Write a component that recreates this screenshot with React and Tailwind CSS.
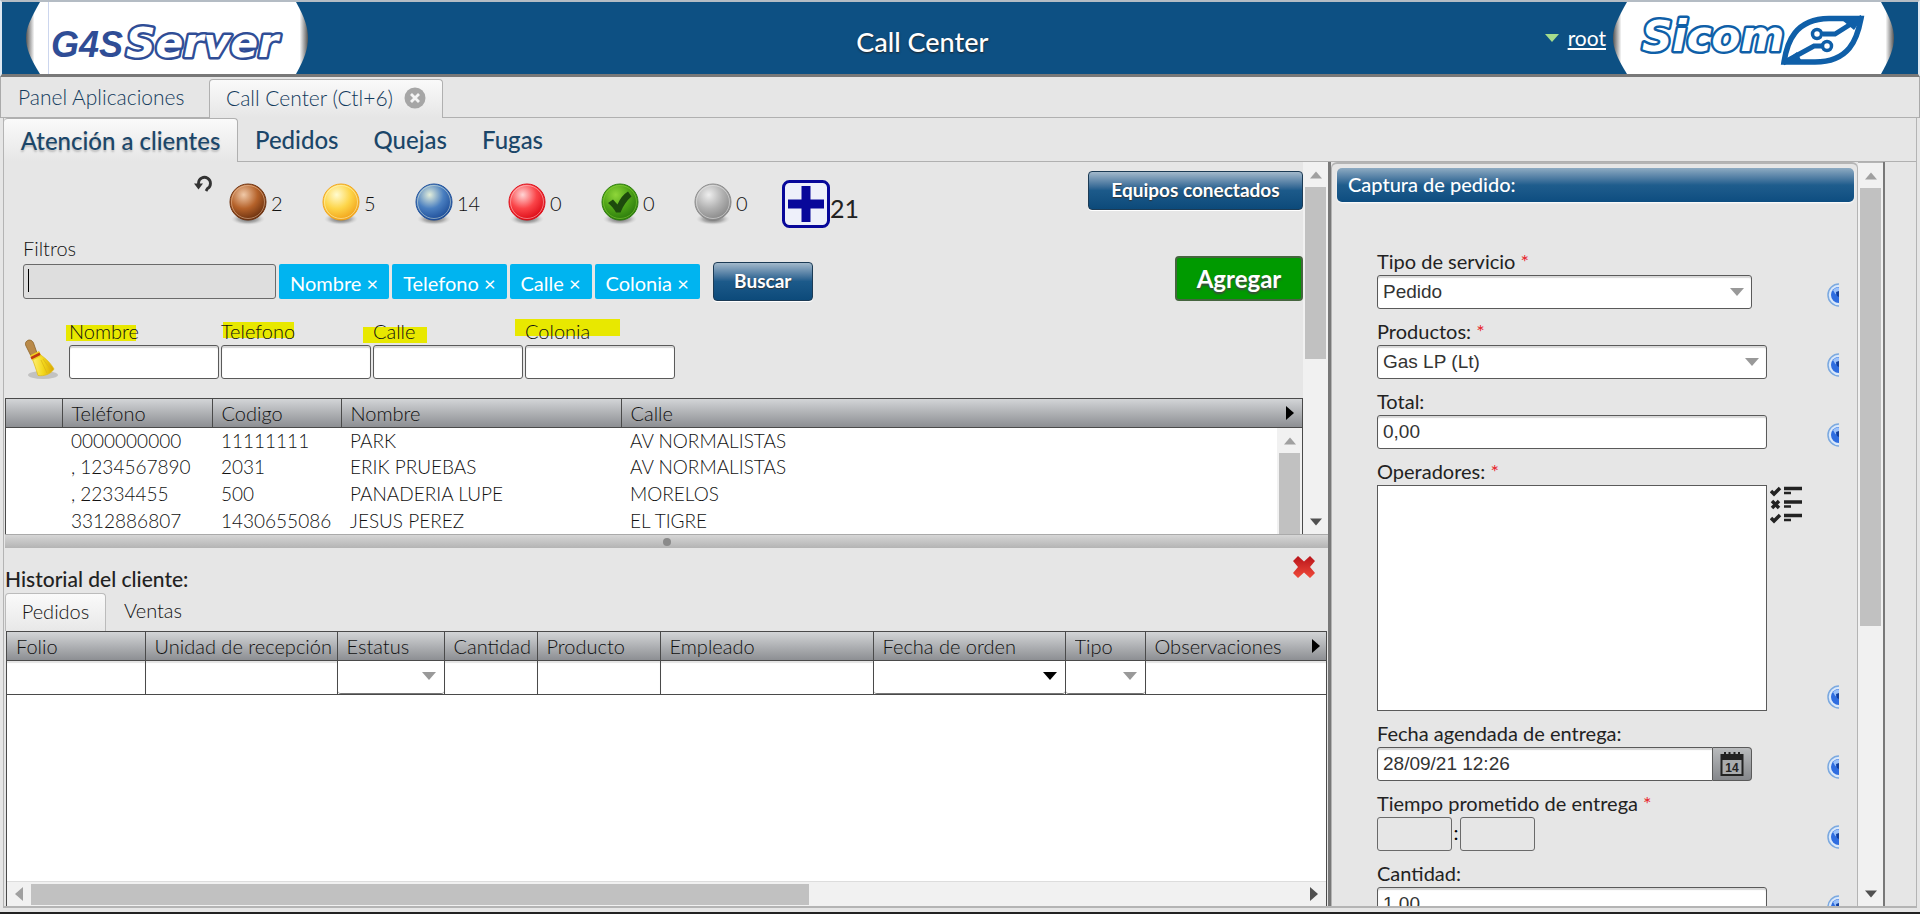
import React, { useState } from "react";

const statusBalls = [
  { id: "brown", label: "Registrados", count: 2, light: "#f0c9a8", mid: "#b5622a", dark: "#6d3210" },
  { id: "yellow", label: "Pendientes", count: 5, light: "#fffbd0", mid: "#fdd549", dark: "#f2a51c" },
  { id: "blue", label: "Asignados", count: 14, light: "#e3eedb", mid: "#4a7fc0", dark: "#1f4f9a" },
  { id: "red", label: "Cancelados", count: 0, light: "#ffd5d5", mid: "#fa4448", dark: "#dd0d18" },
  { id: "check", label: "Surtidos", count: 0, light: "#8fd63a", mid: "#4fa417", dark: "#2d7d0e" },
  { id: "gray", label: "Inactivos", count: 0, light: "#eeeeee", mid: "#b2b2b2", dark: "#8a8a8a" },
];

const searchFields = [
  { name: "Nombre", mark: "-left-[3px] top-[6px] w-[70px] h-[16px]" },
  { name: "Telefono", mark: "left-[2px] top-[3px] w-[71px] h-[16px]" },
  { name: "Calle", mark: "-left-[10px] top-[8px] w-[64px] h-[16px]" },
  { name: "Colonia", mark: "-left-[10px] top-0 w-[105px] h-[17px]" },
];

const clients = [
  ["0000000000", "11111111", "PARK", "AV NORMALISTAS"],
  [", 1234567890", "2031", "ERIK PRUEBAS", "AV NORMALISTAS"],
  [", 22334455", "500", "PANADERIA LUPE", "MORELOS"],
  ["3312886807", "1430655086", "JESUS PEREZ", "EL TIGRE"],
];

const historyColumns = [
  { name: "Folio", width: "w-[138px]" },
  { name: "Unidad de recepción", width: "w-[192px]" },
  { name: "Estatus", width: "w-[107px]", type: "select" },
  { name: "Cantidad", width: "w-[93px]" },
  { name: "Producto", width: "w-[123px]" },
  { name: "Empleado", width: "w-[213px]" },
  { name: "Fecha de orden", width: "w-[192px]", type: "date" },
  { name: "Tipo", width: "w-[80px]", type: "select" },
  { name: "Observaciones", width: "" },
];

const headGradient = "bg-gradient-to-b from-[#d3d5d7] to-[#8d8f93]";
const blueButton =
  "rounded-[4px] border border-[#1c3b55] bg-gradient-to-b from-[#a3b9cb] via-[#1c5a8a] to-[#0c4a7a] text-white font-bold text-[19px] [text-shadow:0_1px_1px_#333] shadow-[0_1px_0_#fff]";
const fieldBox =
  "h-[34px] rounded-[3px] border border-[#5a5a5a] bg-white font-['Liberation_Sans',sans-serif] text-[19px] text-[#333] px-[5px] shadow-[inset_0_2px_1px_#d8d8d8] outline-none";

const Arrow = ({ dir = "down", className = "" }) => {
  const points = {
    down: "0,0 14,0 7,8",
    up: "0,8 14,8 7,0",
    left: "8,0 8,14 0,7",
    right: "0,0 8,7 0,14",
  };
  const flat = dir === "down" || dir === "up";
  return (
    <svg
      width={flat ? 14 : 8}
      height={flat ? 8 : 14}
      viewBox={flat ? "0 0 14 8" : "0 0 8 14"}
      className={className}
      fill="currentColor"
    >
      <polygon points={points[dir]} />
    </svg>
  );
};

const Ball = ({ ball }) => (
  <svg width="40" height="42" viewBox="0 0 40 42">
    <defs>
      <radialGradient id={`ball-${ball.id}`} cx="0.38" cy="0.3" r="0.7">
        <stop offset="0" stopColor={ball.light} />
        <stop offset="0.55" stopColor={ball.mid} />
        <stop offset="1" stopColor={ball.dark} />
      </radialGradient>
      <radialGradient id={`shade-${ball.id}`}>
        <stop offset="0" stopColor="#555" />
        <stop offset="0.6" stopColor="#999" stopOpacity="0.7" />
        <stop offset="1" stopColor="#ccc" stopOpacity="0" />
      </radialGradient>
    </defs>
    <ellipse cx="20" cy="36" rx="17" ry="6" fill={`url(#shade-${ball.id})`} />
    <circle cx="20" cy="19" r="18" fill={`url(#ball-${ball.id})`} stroke={ball.dark} />
    <circle cx="20" cy="19" r="16.5" fill="none" stroke={ball.light} strokeOpacity="0.5" />
    {ball.id === "check" && (
      <path
        d="M8 20l5-3.500 4.500 5c2.500-5.500 5.500-10 10.500-13l3.500 5c-5 4-8 9-11 16h-4.500c-2-4-5-7-8-9.500z"
        fill="#1d4a0d"
      />
    )}
  </svg>
);

const Broom = () => (
  <svg width="36" height="40" viewBox="0 0 36 40">
    <defs>
      <linearGradient id="broom" x1="0" x2="1">
        <stop offset="0" stopColor="#fff07a" />
        <stop offset="0.5" stopColor="#f3d81c" />
        <stop offset="1" stopColor="#d8a500" />
      </linearGradient>
    </defs>
    <ellipse cx="20" cy="36" rx="15" ry="4" fill="#aaa" opacity="0.6" />
    <path d="M3 3c2-3 6-2.500 7.500 1l3.500 10-6 3-5-10c-.7-1.500-.8-3 0-4z" fill="#b98a4a" stroke="#8d6327" strokeWidth="0.8" />
    <path d="M9 19l7-4c5 3 11 8 15 15-3 5-10 7.500-16 6.500C13 30 11 24 9 19z" fill="url(#broom)" stroke="#e0bd1c" strokeWidth="0.8" />
    <path d="M7 16.500l9-4.500 2.500 5-9 4.500z" fill="#f0d020" />
    <path d="M7.500 18l9-4.500 1 2.500-9 4.500z" fill="#c03a12" />
    <path d="M18 21l6 13M20 20l8 11" stroke="#dcb51a" fill="none" strokeWidth="0.8" />
  </svg>
);

const ServerLogo = () => (
  <svg width="286" height="72" viewBox="0 0 286 72" className="ml-6 shrink-0">
    <defs>
      <linearGradient id="oval-left" x1="0" x2="1">
        <stop offset="0" stopColor="#555" />
        <stop offset="0.03" stopColor="#fff" />
        <stop offset="0.97" stopColor="#fff" />
        <stop offset="1" stopColor="#555" />
      </linearGradient>
    </defs>
    <path d="M14 0C4 18 0 26 0 36s4 20 14 36h256c9-16 12-26 12-36s-3-20-12-36z" fill="url(#oval-left)" />
    <path d="M22.500 0v72" stroke="#ccd6ee" />
    <text x="25" y="55" fontFamily="Liberation Sans, sans-serif" fontStyle="italic" fontWeight="700" fontSize="36" fill="#2f4d96">
      G4S
    </text>
    <text
      x="100"
      y="55"
      fontFamily="DejaVu Sans, sans-serif"
      fontStyle="italic"
      fontWeight="700"
      fontSize="41"
      fill="#fff"
      stroke="#2f4d96"
      strokeWidth="5"
      strokeLinejoin="round"
      paintOrder="stroke"
    >
      Server
    </text>
  </svg>
);

const SicomLogo = () => (
  <svg width="284" height="72" viewBox="0 0 284 72" className="mr-[21px]">
    <defs>
      <linearGradient id="oval-right" x1="0" x2="1">
        <stop offset="0" stopColor="#555" />
        <stop offset="0.03" stopColor="#fff" />
        <stop offset="0.97" stopColor="#fff" />
        <stop offset="1" stopColor="#555" />
      </linearGradient>
    </defs>
    <path d="M14 0C4 18 0 26 0 36s4 20 14 36h254c9-16 13-26 13-36s-4-20-13-36z" fill="url(#oval-right)" />
    <text
      x="29"
      y="49"
      fontFamily="DejaVu Sans, sans-serif"
      fontStyle="italic"
      fontWeight="700"
      fontSize="42"
      fill="#fff"
      stroke="#0f5fa8"
      strokeWidth="5"
      strokeLinejoin="round"
      paintOrder="stroke"
    >
      Sicom
    </text>
    <path
      d="M248 16.500C244 38 236 60 202 60h-31C174 40 182 17 216 16.500z"
      fill="#fff"
      stroke="#0f5fa8"
      strokeWidth="5.500"
    />
    <path d="M249 15l-27 17h-12M170 61l31-17h8" fill="none" stroke="#0f5fa8" strokeWidth="5" />
    <path d="M168 62l16-12 6 12zM251 14l-22 4 12 10z" fill="#0f5fa8" />
    <circle cx="204" cy="32" r="4.500" fill="#fff" stroke="#0f5fa8" strokeWidth="3.500" />
    <circle cx="214" cy="44" r="4.500" fill="#fff" stroke="#0f5fa8" strokeWidth="3.500" />
  </svg>
);

const HelpIcon = ({ className }) => (
  <svg width="12" height="24" viewBox="0 0 12 24" className={`shrink-0 ${className}`}>
    <circle cx="12" cy="12" r="11" fill="#dbe9fa" stroke="#7ba9e0" strokeWidth="1.500" />
    <circle cx="12" cy="12" r="8" fill="#2f6de0" />
    <path d="M6 7c2-2 4-2.500 6-2.500V9c-2 0-3 1-3.500 2.500z" fill="#9cc2fa" />
    <path d="M9 9l3-1v6l-2-1z" fill="#123f9e" />
  </svg>
);

const Checklist = () => (
  <svg width="34" height="38" viewBox="0 0 34 38" className="ml-[3px] mt-px">
    <g stroke="#222" fill="none" strokeWidth="3.500">
      <path d="M1 5l3 3 6-6M2 15l7 7M9 15l-7 7M1 32l3 3 6-6" />
      <path d="M14 2.500h18M14 16h18M14 29.500h18" />
      <path d="M14 7h7M14 20.500h7M14 34h7" strokeWidth="2.500" />
    </g>
  </svg>
);

const VerticalScroll = ({ thumb, down = true, className = "" }) => (
  <div className={`w-[25px] shrink-0 flex flex-col items-center bg-[#f1f1f1] ${className}`}>
    <div className="h-[25px] shrink-0 flex items-center">
      <Arrow dir="up" className="w-3 text-[#a0a0a0]" />
    </div>
    <div className={`w-[21px] bg-[#c1c1c1] ${thumb}`} />
    {down && (
      <div className="h-[25px] mt-auto shrink-0 flex items-center">
        <Arrow className="w-3 text-[#505050]" />
      </div>
    )}
  </div>
);

const Field = ({ id, label, required, tall, children }) => (
  <div className="mb-[10px]">
    <label htmlFor={id} className="block h-[26px] leading-[25px] text-[20px] text-[#222] whitespace-nowrap">
      {label}
      {required && <span className="text-[#e8252c]"> *</span>}
    </label>
    <div className={`flex justify-between ${tall ? "items-end" : "items-center"}`}>
      <div className="flex items-start">{children}</div>
      <HelpIcon className={tall ? "mb-[2px]" : "mt-[6px]"} />
    </div>
  </div>
);

const SelectBox = ({ id, value, width }) => (
  <div className={`relative ${width}`}>
    <select id={id} className={`${fieldBox} block w-full appearance-none`}>
      <option>{value}</option>
    </select>
    <Arrow className="absolute right-2 top-[13px] text-[#999] pointer-events-none" />
  </div>
);

const Header = () => (
  <header className="h-[77px] shrink-0 border-t-2 border-x-2 border-b-[3px] border-t-[#b4bcc4] border-x-[#dde8f2] border-b-[#787878] bg-[#0d5083] flex items-center">
    <ServerLogo />
    <h1 className="flex-1 pt-2 pr-3 text-center text-white text-[27px] font-medium leading-8 [text-shadow:0_1px_2px_#222]">
      Call Center
    </h1>
    <div className="flex items-center justify-end">
      <Arrow className="text-[#a5dc8c] mr-[9px]" />
      <a href="#root" className="text-white underline text-[21px] leading-6 mr-[7px]">
        root
      </a>
      <SicomLogo />
    </div>
  </header>
);

const OrderForm = () => (
  <aside className="w-[557px] shrink-0 flex border-l-[3px] border-r-2 border-[#787878]">
    <div className="flex-1 min-w-0 overflow-hidden border-t-2 border-x border-[#b4b4b4] rounded-t-md pt-1 pl-[5px] pr-[3px]">
      <h2 className="h-[34px] rounded-[5px] bg-gradient-to-b from-[#8eabc2] via-[#1f5d8d] to-[#0d4d80] text-white text-[20px] font-medium leading-[32px] pl-[11px] shadow-[0_1px_2px_#fff]">
        Captura de pedido:
      </h2>
      <form className="pt-[47px] pl-10 pr-[15px]">
        <Field id="servicio" label="Tipo de servicio" required>
          <SelectBox id="servicio" value="Pedido" width="w-[375px]" />
        </Field>
        <Field id="productos" label="Productos:" required>
          <SelectBox id="productos" value="Gas LP (Lt)" width="w-[390px]" />
        </Field>
        <Field id="total" label="Total:">
          <input id="total" defaultValue="0,00" className={`${fieldBox} w-[390px]`} />
        </Field>
        <Field id="operadores" label="Operadores:" required tall>
          <textarea id="operadores" className="block w-[390px] h-[226px] border border-[#5a5a5a] bg-white resize-none outline-none" />
          <Checklist />
        </Field>
        <Field id="fecha" label="Fecha agendada de entrega:">
          <input id="fecha" defaultValue="28/09/21 12:26" className={`${fieldBox} w-[336px] rounded-r-none`} />
          <button
            type="button"
            aria-label="Calendario"
            className="w-[39px] h-[34px] flex items-center justify-center border border-l-0 border-[#5a5a5a] rounded-r-[4px] bg-gradient-to-b from-[#b9bbbd] to-[#85878b]"
          >
            <svg width="24" height="26" viewBox="0 0 24 26">
              <path d="M1.500 4h21v20h-21z" fill="#a9abad" stroke="#222" strokeWidth="2" />
              <path d="M1 4h22v5H1z" fill="#222" />
              <path d="M5 1v5M9.500 1v5M14.500 1v5M19 1v5" stroke="#222" strokeWidth="2" />
              <text x="12" y="21" textAnchor="middle" fontFamily="Liberation Sans, sans-serif" fontWeight="700" fontSize="12" fill="#222">
                14
              </text>
            </svg>
          </button>
        </Field>
        <Field id="horas" label="Tiempo prometido de entrega" required>
          <input id="horas" className="w-[75px] h-[34px] rounded-[3px] border border-[#6a6a6a] bg-[#e6e6e6]" />
          <span className="w-2 text-center text-[20px]">:</span>
          <input aria-label="Minutos" className="w-[75px] h-[34px] rounded-[3px] border border-[#6a6a6a] bg-[#e6e6e6]" />
        </Field>
        <Field id="cantidad" label="Cantidad:">
          <input id="cantidad" defaultValue="1,00" className={`${fieldBox} w-[390px]`} />
        </Field>
      </form>
    </div>
    <VerticalScroll thumb="h-[438px]" className="border-t border-[#b4b4b4]" />
  </aside>
);

const ClientSearch = () => {
  const [chips, setChips] = useState(searchFields.map((f) => f.name));

  return (
    <section className="h-[372px] shrink-0 flex overflow-hidden">
      <div className="flex-1 min-w-0">
        <div className="h-[74px] flex items-start">
          <button type="button" aria-label="Actualizar" className="ml-[189px] mt-[12px]">
            <svg width="20" height="20" viewBox="0 0 20 20">
              <path d="M4.500 12V9a6 6 0 1 1 9 5.500L12 17" fill="none" stroke="#333" strokeWidth="2.800" />
              <path d="M0 9.500h9l-4.500 6z" fill="#333" />
            </svg>
          </button>
          <div className="flex mt-[21px] ml-[14px]">
            {statusBalls.map((ball) => (
              <div key={ball.id} title={ball.label} className="w-[93px] flex items-center gap-[3px]">
                <Ball ball={ball} />
                <span className="pb-[2px] text-[20px] font-light leading-6 text-[#111]">{ball.count}</span>
              </div>
            ))}
          </div>
          <button type="button" className="-ml-1 mt-[18px] flex items-center">
            <svg width="48" height="48" viewBox="0 0 48 48">
              <rect x="1.500" y="1.500" width="45" height="45" rx="6" fill="#eef0fa" stroke="#08089a" strokeWidth="3" />
              <path d="M19.500 6h9v13.500H42v9H28.500V42h-9V28.500H6v-9h13.500z" fill="#08089a" />
            </svg>
            <span className="text-[25px] text-[#222] leading-8 mt-2">21</span>
          </button>
          <button type="button" className={`${blueButton} ml-auto mt-[9px] w-[215px] h-[39px]`}>
            Equipos conectados
          </button>
        </div>

        <div className="flex items-end justify-between pl-[18px]">
          <div>
            <label htmlFor="filtros" className="block h-[26px] leading-[25px] text-[20px] font-light text-[#111]">
              Filtros
            </label>
            <div className="flex items-center h-[39px] gap-[3px]">
              <div className="relative">
                <input
                  id="filtros"
                  autoFocus
                  className="block w-[253px] h-[35px] rounded-[3px] border border-[#6a6a6a] bg-[#dedede] px-2 caret-transparent outline-none"
                />
                <span className="absolute left-[5px] top-[5px] w-px h-[23px] bg-black" />
              </div>
              {chips.map((chip) => (
                <button
                  key={chip}
                  type="button"
                  onClick={() => setChips(chips.filter((c) => c !== chip))}
                  className="h-[35px] px-[11px] pt-[2px] rounded-[2px] bg-[#00b4f0] text-white text-[20px] leading-6 whitespace-nowrap"
                >
                  {chip} ×
                </button>
              ))}
              <button type="button" className={`${blueButton} ml-[10px] w-[100px] h-[39px]`}>
                Buscar
              </button>
            </div>
          </div>
          <button
            type="button"
            className="w-[128px] h-[45px] rounded-[4px] border-2 border-[#45653f] bg-[#009a00] text-white font-bold text-[24px] leading-8 [text-shadow:0_2px_2px_#444]"
          >
            Agregar
          </button>
        </div>

        <div className="flex items-end mt-[18px] pl-[18px]">
          <button type="button" aria-label="Limpiar filtros" className="w-[46px]">
            <Broom />
          </button>
          <div className="flex gap-[2px]">
            {searchFields.map((field) => (
              <div key={field.name} className="w-[150px]">
                <label htmlFor={field.name} className="relative block h-[26px] leading-6 text-[20px] font-light text-[#111]">
                  <span className={`absolute bg-[#e8e800] ${field.mark}`} />
                  <span className="relative">{field.name}</span>
                </label>
                <input id={field.name} className={`${fieldBox} block w-full`} />
              </div>
            ))}
          </div>
        </div>

        {/* Clients grid */}
        <div className="mt-[19px] border border-[#4a4a4a] bg-white h-[240px] relative">
          <table className="w-full table-fixed border-collapse text-left text-[#111]">
            <thead className="text-[20px] leading-6">
              <tr className={`h-[28px] ${headGradient}`}>
                <th className="w-[56px] border-r border-b border-[#4a4a4a]" />
                <th className="w-[150px] border-r border-b border-[#4a4a4a] pl-[9px] font-light">Teléfono</th>
                <th className="w-[129px] border-r border-b border-[#4a4a4a] pl-[9px] font-light">Codigo</th>
                <th className="w-[280px] border-r border-b border-[#4a4a4a] pl-[9px] font-light">Nombre</th>
                <th className="border-b border-[#4a4a4a] pl-[9px] pr-2 font-light">
                  <span className="flex items-center justify-between">
                    Calle
                    <Arrow dir="right" className="text-black" />
                  </span>
                </th>
              </tr>
            </thead>
            <tbody className="text-[19px] leading-[26px]">
              {clients.map((row) => (
                <tr key={row[0]} className="h-[27px] align-top">
                  <td />
                  {row.map((cell, i) => (
                    <td key={i} className="pl-[9px] font-light whitespace-nowrap">
                      {cell}
                    </td>
                  ))}
                </tr>
              ))}
            </tbody>
          </table>
          <VerticalScroll thumb="flex-1" down={false} className="absolute right-0 top-[29px] bottom-0" />
        </div>
      </div>
      <VerticalScroll thumb="h-[172px]" />
    </section>
  );
};

const HistoryFilter = ({ column }) => {
  const base = "block w-full h-[33px] bg-white outline-none";
  if (column.type) {
    return (
      <div className="relative">
        <select aria-label={column.name} className={`${base} appearance-none rounded-b-[3px] border-b border-[#777]`} />
        <Arrow
          className={`absolute right-[8px] top-[11px] pointer-events-none ${
            column.type === "date" ? "text-black" : "text-[#999]"
          }`}
        />
      </div>
    );
  }
  return <input aria-label={column.name} className={`${base} px-1 shadow-[inset_0_2px_1px_#e4e4e4]`} />;
};

const ClientHistory = () => (
  <section className="flex-1 min-h-0 flex flex-col">
    <div className="flex justify-between items-start h-[45px] pr-[12px]">
      <h2 className="mt-[17px] text-[21px] font-medium leading-7 text-[#222]">Historial del cliente:</h2>
      <button type="button" aria-label="Cerrar historial" className="mt-[7px]">
        <svg width="24" height="24" viewBox="0 0 24 24">
          <defs>
            <linearGradient id="close-red" x1="0" x2="0" y1="0" y2="1">
              <stop offset="0" stopColor="#b8141a" />
              <stop offset="1" stopColor="#f04a3a" />
            </linearGradient>
          </defs>
          <path d="M6 1l6 5.500L18 1l5 5-5 6 5 6-5 5-6-5.500L6 23l-5-5 5-6-5-6z" fill="url(#close-red)" />
        </svg>
      </button>
    </div>
    <div role="tablist" className="flex h-[38px] text-[20px] font-light leading-6 text-[#111]">
      <button role="tab" aria-selected="true" className="w-[101px] pb-1 border border-b-0 border-[#bbb] rounded-t-[4px] bg-gradient-to-b from-[#fafafa] to-[#e8e8e8]">
        Pedidos
      </button>
      <button role="tab" aria-selected="false" className="px-[18px] pb-1">
        Ventas
      </button>
    </div>
    <div className="flex-1 min-h-0 flex flex-col ml-px mr-px border-x border-t border-[#4a4a4a] bg-white">
      <table className="w-full table-fixed border-collapse text-left text-[20px] leading-6 text-[#111]">
        <thead>
          <tr className={`h-[28px] ${headGradient}`}>
            {historyColumns.map((column, i) => (
              <th
                key={column.name}
                className={`${column.width} border-r last:border-r-0 border-b border-[#4a4a4a] pl-[9px] pr-[6px] font-light`}
              >
                <span className="flex items-center justify-between overflow-hidden whitespace-nowrap">
                  {column.name}
                  {i === historyColumns.length - 1 && <Arrow dir="right" className="text-black" />}
                </span>
              </th>
            ))}
          </tr>
          <tr>
            {historyColumns.map((column) => (
              <td key={column.name} className="p-0 border-r last:border-r-0 border-b border-[#4a4a4a]">
                <HistoryFilter column={column} />
              </td>
            ))}
          </tr>
        </thead>
      </table>
      <div className="mt-auto h-[25px] flex items-center bg-[#f1f1f1] border-t border-[#ddd]">
        <Arrow dir="left" className="mx-[8px] text-[#a0a0a0]" />
        <div className="w-[59%] h-[21px] bg-[#c1c1c1]" />
        <Arrow dir="right" className="ml-auto mr-[8px] text-[#505050]" />
      </div>
    </div>
  </section>
);

export default function App() {
  return (
    <div className="h-screen flex flex-col overflow-hidden bg-[#e6e6e6] border-b-2 border-[#222] font-[Lato,sans-serif]">
      <Header />

      {/* Application tabs */}
      <nav className="flex h-[41px] shrink-0 border-x border-[#aaa] text-[21px] font-light text-[#123a5c]">
        <button className="w-[208px] pl-[17px] text-left border-b border-[#b0b0b0] whitespace-nowrap">
          Panel Aplicaciones
        </button>
        <div className="w-[234px] mt-[2px] pl-4 pb-[2px] flex items-center border border-b-0 border-[#b0b0b0] rounded-t-[4px] bg-gradient-to-b from-[#fafafa] to-[#e6e6e6]">
          <button className="whitespace-nowrap">Call Center (Ctl+6)</button>
          <button aria-label="Cerrar" className="ml-[11px]">
            <svg width="22" height="22" viewBox="0 0 22 22">
              <circle cx="11" cy="11" r="10.500" fill="#a6a6a6" />
              <path d="M7 7l8 8M15 7l-8 8" stroke="#f4f4f4" strokeWidth="2.800" />
            </svg>
          </button>
        </div>
        <div className="flex-1 border-b border-[#b0b0b0]" />
      </nav>

      <div className="flex-1 min-h-0 flex flex-col mx-[3px] mb-[4px] border-x border-b-2 border-[#b4b4b4]">
        <nav className="flex h-[44px] shrink-0 text-[24px] font-medium text-[#1b4669]">
          <button className="w-[234px] border border-l-0 border-b-0 border-[#b0b0b0] rounded-t-[4px] bg-gradient-to-b from-[#fafafa] to-[#e6e6e6] whitespace-nowrap [text-shadow:0_2px_2px_#bbb]">
            Atención a clientes
          </button>
          <div className="flex-1 flex items-center gap-[35px] pl-[17px] border-b border-[#b0b0b0]">
            <button>Pedidos</button>
            <button>Quejas</button>
            <button>Fugas</button>
          </div>
        </nav>

        <div className="flex-1 min-h-0 flex">
          <main className="flex-1 min-w-0 flex flex-col pl-px">
            <ClientSearch />
            <div className="h-[14px] shrink-0 flex items-center justify-center border-t border-[#aaa] bg-gradient-to-b from-[#d6d6d6] to-[#b4b4b4]">
              <span className="w-2 h-2 rounded-full bg-[#8a8a8a]" />
            </div>
            <ClientHistory />
          </main>
          <OrderForm />
          <div className="w-[31px] shrink-0" />
        </div>
      </div>
    </div>
  );
}
